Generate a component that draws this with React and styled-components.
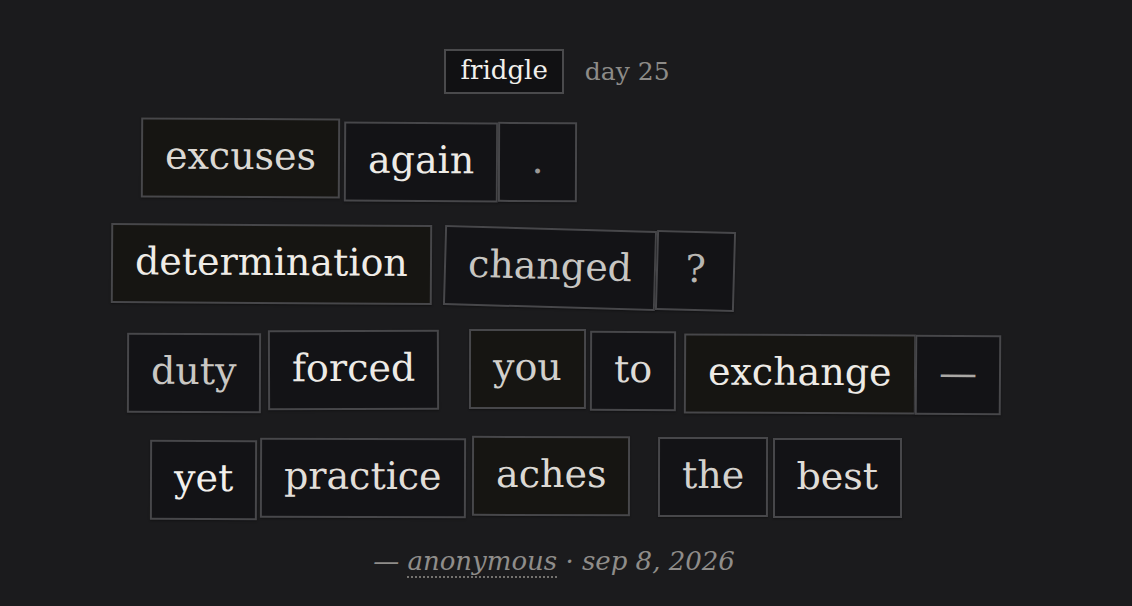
import React from "react";
import styled, { createGlobalStyle } from "styled-components";

const GlobalStyle = createGlobalStyle`
  html, body {
    margin: 0;
    padding: 0;
    background: #1b1b1d;
  }
  body {
    font-family: "DejaVu Serif", Georgia, serif;
    color: #e4e1dc;
  }
`;

const Page = styled.div`
  width: 1132px;
  height: 606px;
  overflow: hidden;
  display: flex;
  flex-direction: column;
  box-sizing: border-box;
  padding-top: 49px;
`;

const Header = styled.header`
  display: flex;
  align-items: center;
  justify-content: center;
  gap: 21px;
  padding-right: 18px;
`;

const Brand = styled.div`
  border: 2px solid #4a4a4c;
  background: #111113;
  color: #f2f0ec;
  font-size: 26px;
  line-height: 1;
  padding: 6px 14px 9px;
`;

const Day = styled.span`
  color: #8d8b88;
  font-size: 25px;
`;

const Board = styled.main`
  display: flex;
  flex-direction: column;
  gap: 26px;
  margin-top: 26px;
`;

const Row = styled.div`
  display: flex;
  align-items: flex-start;
  padding-left: ${(p) => p.$left}px;
  height: 80px;
`;

const tones = {
  warm: "#161512",
  cool: "#131316",
};

const Magnet = styled.span`
  box-sizing: border-box;
  height: 80px;
  min-width: 79px;
  display: inline-flex;
  align-items: center;
  justify-content: center;
  padding: 0 22px 4px;
  margin-left: ${(p) => p.$ml}px;
  border: 2px solid #47474a;
  background: ${(p) => tones[p.$tone]};
  color: ${(p) => p.$color || "#e6e3de"};
  font-size: 38px;
  white-space: nowrap;
  box-shadow: 0 1px 2px rgba(0, 0, 0, 0.35);
  transform: translateY(${(p) => p.$dy}px) rotate(${(p) => p.$rot}deg);
`;

const Footer = styled.footer`
  margin-top: 28px;
  text-align: center;
  padding-right: 24px;
  font-style: italic;
  font-size: 26px;
  color: #8f8d8a;
`;

const Author = styled.span`
  border-bottom: 2px dotted #74726f;
`;

const rows = [
  {
    left: 141,
    words: [
      ["excuses", 0, -2, 0.3, "warm", "#dcd9d4"],
      ["again", 4, 2, 0.3, "cool", "#eeebe6"],
      [".", 0, 2, 0.2, "cool", "#9a9896"],
    ],
  },
  {
    left: 111,
    words: [
      ["determination", 0, -2, 0.35, "warm", "#efece7"],
      ["changed", 12, 2, 1.6, "cool", "#c8c6c2"],
      ["?", 0, 5, 1.6, "cool", "#b7b5b1"],
    ],
  },
  {
    left: 127,
    words: [
      ["duty", 0, 1, 0.2, "cool", "#c9c7c3"],
      ["forced", 7, -2, -0.2, "cool", "#eeebe6"],
      ["you", 30, -3, 0.1, "warm", "#d2d0cc"],
      ["to", 4, -1, 0.2, "cool", "#dedbd6"],
      ["exchange", 8, 2, 0.3, "warm", "#eeebe6"],
      ["—", 0, 3, 0.4, "cool", "#aaa8a5"],
    ],
  },
  {
    left: 150,
    words: [
      ["yet", 0, 2, 0.2, "cool", "#f2f0ec"],
      ["practice", 3, 0, 0.2, "cool", "#e2dfda"],
      ["aches", 6, -2, 0.1, "warm", "#dcd9d4"],
      ["the", 28, -1, 0.1, "cool", "#d4d2ce"],
      ["best", 4, 0, 0, "cool", "#e0ddd8"],
    ],
  },
];

export default function App() {
  return (
    <>
      <GlobalStyle />
      <Page>
        <Header>
          <Brand>fridgle</Brand>
          <Day>day 25</Day>
        </Header>
        <Board>
          {rows.map((row, i) => (
            <Row key={i} $left={row.left}>
              {row.words.map(([text, ml, dy, rot, tone, color], j) => (
                <Magnet
                  key={j}
                  $ml={ml}
                  $dy={dy}
                  $rot={rot}
                  $tone={tone}
                  $color={color}
                >
                  {text}
                </Magnet>
              ))}
            </Row>
          ))}
        </Board>
        <Footer>
          — <Author>anonymous</Author> · sep 8, 2026
        </Footer>
      </Page>
    </>
  );
}
